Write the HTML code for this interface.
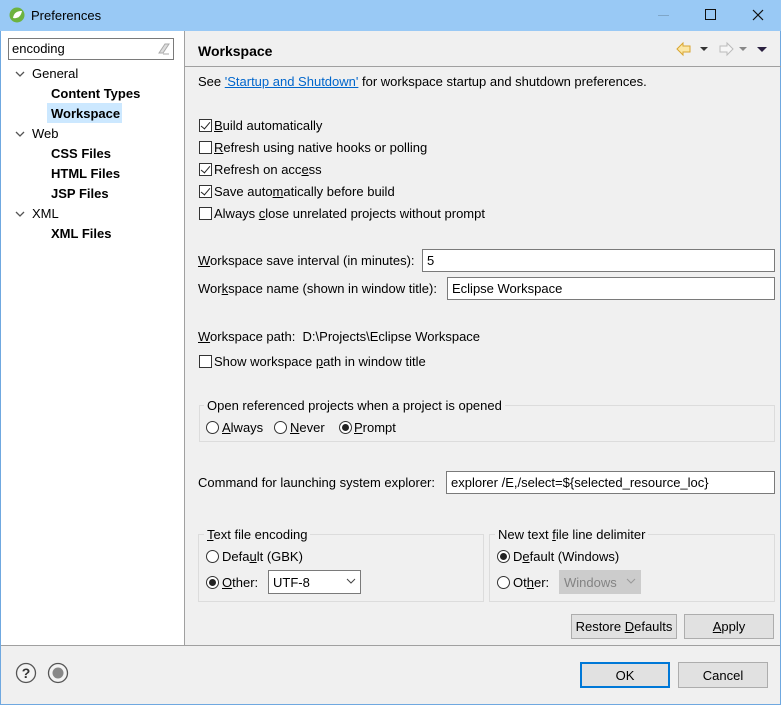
<!DOCTYPE html><html><head><style>
*{box-sizing:border-box;margin:0;padding:0}
body{width:781px;height:705px;overflow:hidden;font-family:"Liberation Sans","Noto Sans CJK SC",sans-serif;font-size:13px;color:#000;background:#f0f0f0;position:relative}
.a{position:absolute;white-space:nowrap}
.t{line-height:16px;padding-top:1px}
.cb{position:absolute;width:13px;height:13px;border:1px solid #333;background:#fff}
.cb.c::after{content:"";position:absolute;left:3px;top:0px;width:4px;height:8px;border:solid #222;border-width:0 1.5px 1.5px 0;transform:rotate(40deg)}
.rb{position:absolute;width:13px;height:13px;border:1px solid #333;border-radius:50%;background:#fff}
.rb.c::after{content:"";position:absolute;left:2px;top:2px;width:7px;height:7px;border-radius:50%;background:#222}
.in{position:absolute;background:#fff;border:1px solid #7a7a7a;padding:4px 4px 2px;line-height:14px}
.grp{position:absolute;border:1px solid #dcdcdc}
.lg{position:absolute;background:#f0f0f0;padding:1px 3px 0;line-height:14px}
.btn{position:absolute;background:#e1e1e1;border:1px solid #adadad;text-align:center;line-height:24px}
u{text-decoration:underline}
</style></head><body>
<div class="a" style="left:0;top:0;width:781px;height:705px;border:1px solid #6fa8e0"></div>
<div class="a" style="left:0;top:0;width:781px;height:31px;background:#99c9f5"></div>
<svg class="a" style="left:9px;top:7px" width="16" height="16"><circle cx="8" cy="8" r="7.5" fill="#6db33f"/><path d="M4 11 C5 5 9 4 13 4 C12 9 9 12 4 11Z" fill="#fff"/></svg>
<div class="a t" style="left:31px;top:7px;font-size:13px">Preferences</div>
<div class="a" style="left:658px;top:15px;width:11px;height:1px;background:#7fa6c8"></div>
<div class="a" style="left:705px;top:9px;width:11px;height:11px;border:1px solid #111"></div>
<svg class="a" style="left:752px;top:9px" width="12" height="12"><path d="M1 1L11 11M11 1L1 11" stroke="#111" stroke-width="1.2"/></svg>
<div class="a" style="left:1px;top:31px;width:184px;height:614px;background:#fff;border-right:1px solid #a0a0a0"></div>
<div class="in" style="left:8px;top:38px;width:166px;height:22px;padding:3px 3px 1px;font-size:13px">encoding</div>
<svg class="a" style="left:156px;top:42px" width="14" height="13"><path d="M3 11L9 2H13L7 11Z" fill="#ddd" stroke="#aaa"/><path d="M7 12H13" stroke="#aaa"/></svg>
<svg class="a" style="left:15px;top:70px" width="10" height="8"><path d="M1 2L5 6L9 2" stroke="#555" fill="none" stroke-width="1.3"/></svg>
<svg class="a" style="left:15px;top:130px" width="10" height="8"><path d="M1 2L5 6L9 2" stroke="#555" fill="none" stroke-width="1.3"/></svg>
<svg class="a" style="left:15px;top:210px" width="10" height="8"><path d="M1 2L5 6L9 2" stroke="#555" fill="none" stroke-width="1.3"/></svg>
<div class="a t" style="left:32px;top:65px">General</div>
<div class="a t" style="left:51px;top:85px;font-weight:bold">Content Types</div>
<div class="a" style="left:47px;top:103px;width:75px;height:20px;background:#cce8ff"></div>
<div class="a t" style="left:51px;top:105px;font-weight:bold">Workspace</div>
<div class="a t" style="left:32px;top:125px">Web</div>
<div class="a t" style="left:51px;top:145px;font-weight:bold">CSS Files</div>
<div class="a t" style="left:51px;top:165px;font-weight:bold">HTML Files</div>
<div class="a t" style="left:51px;top:185px;font-weight:bold">JSP Files</div>
<div class="a t" style="left:32px;top:205px">XML</div>
<div class="a t" style="left:51px;top:225px;font-weight:bold">XML Files</div>
<div class="a t" style="left:198px;top:42px;font-weight:bold;font-size:14px">Workspace</div>
<svg class="a" style="left:675px;top:41px" width="100" height="16"><path d="M2 8L8 2V5H15V11H8V14Z" fill="#fbe7a6" stroke="#d9a530"/><path d="M25 6L29 10L33 6Z" fill="#333"/><path d="M58 8L52 2V5H45V11H52V14Z" fill="#f6f6f6" stroke="#bbb"/><path d="M64 6L68 10L72 6Z" fill="#888"/><path d="M82 6L87 11L92 6Z" fill="#2a2040"/></svg>
<div class="a" style="left:185px;top:66px;width:596px;height:1px;background:#a0a0a0"></div>
<div class="a t" style="left:198px;top:73px">See <span style="color:#0066cc;text-decoration:underline">'Startup and Shutdown'</span> for workspace startup and shutdown preferences.</div>
<div class="cb c" style="left:199px;top:119px"></div><div class="a t" style="left:214px;top:117px"><u>B</u>uild automatically</div>
<div class="cb" style="left:199px;top:141px"></div><div class="a t" style="left:214px;top:139px"><u>R</u>efresh using native hooks or polling</div>
<div class="cb c" style="left:199px;top:163px"></div><div class="a t" style="left:214px;top:161px">Refresh on acc<u>e</u>ss</div>
<div class="cb c" style="left:199px;top:185px"></div><div class="a t" style="left:214px;top:183px">Save auto<u>m</u>atically before build</div>
<div class="cb" style="left:199px;top:207px"></div><div class="a t" style="left:214px;top:205px">Always <u>c</u>lose unrelated projects without prompt</div>
<div class="a t" style="left:198px;top:252px"><u>W</u>orkspace save interval (in minutes):</div>
<div class="in" style="left:422px;top:249px;width:353px;height:23px">5</div>
<div class="a t" style="left:198px;top:280px">Wor<u>k</u>space name (shown in window title):</div>
<div class="in" style="left:447px;top:277px;width:328px;height:23px">Eclipse Workspace</div>
<div class="a t" style="left:198px;top:328px"><u>W</u>orkspace path:&nbsp; D:\Projects\Eclipse Workspace</div>
<div class="cb" style="left:199px;top:355px"></div><div class="a t" style="left:214px;top:353px">Show workspace <u>p</u>ath in window title</div>
<div class="grp" style="left:199px;top:405px;width:576px;height:37px"></div>
<div class="lg" style="left:204px;top:398px">Open referenced projects when a project is opened</div>
<div class="rb" style="left:206px;top:421px"></div><div class="a t" style="left:222px;top:419px"><u>A</u>lways</div>
<div class="rb" style="left:274px;top:421px"></div><div class="a t" style="left:290px;top:419px"><u>N</u>ever</div>
<div class="rb c" style="left:339px;top:421px"></div><div class="a t" style="left:354px;top:419px"><u>P</u>rompt</div>
<div class="a t" style="left:198px;top:474px">Command for launching system explorer:</div>
<div class="in" style="left:446px;top:471px;width:329px;height:23px">explorer /E,/select=${selected_resource_loc}</div>
<div class="grp" style="left:198px;top:534px;width:286px;height:68px"></div>
<div class="lg" style="left:204px;top:527px"><u>T</u>ext file encoding</div>
<div class="rb" style="left:206px;top:550px"></div><div class="a t" style="left:222px;top:548px">Defa<u>u</u>lt (GBK)</div>
<div class="rb c" style="left:206px;top:576px"></div><div class="a t" style="left:222px;top:574px"><u>O</u>ther:</div>
<div class="in" style="left:268px;top:570px;width:93px;height:24px;padding-top:5px">UTF-8</div>
<svg class="a" style="left:346px;top:578px" width="10" height="7"><path d="M1 1L5 5L9 1" stroke="#444" fill="none"/></svg>
<div class="grp" style="left:489px;top:534px;width:286px;height:68px"></div>
<div class="lg" style="left:495px;top:527px">New text <u>f</u>ile line delimiter</div>
<div class="rb c" style="left:497px;top:550px"></div><div class="a t" style="left:513px;top:548px">D<u>e</u>fault (Windows)</div>
<div class="rb" style="left:497px;top:576px"></div><div class="a t" style="left:513px;top:574px">Ot<u>h</u>er:</div>
<div class="a" style="left:559px;top:570px;width:82px;height:24px;background:#ccc;border:1px solid #ccc;color:#838383;padding:5px 4px 0;line-height:14px">Windows</div>
<svg class="a" style="left:626px;top:578px" width="10" height="7"><path d="M1 1L5 5L9 1" stroke="#999" fill="none"/></svg>
<div class="btn" style="left:571px;top:614px;width:106px;height:25px">Restore <u>D</u>efaults</div>
<div class="btn" style="left:684px;top:614px;width:90px;height:25px"><u>A</u>pply</div>
<div class="a" style="left:1px;top:645px;width:779px;height:1px;background:#a0a0a0"></div>
<svg class="a" style="left:15px;top:662px" width="60" height="24"><circle cx="11" cy="11" r="9.5" fill="#f4f4f4" stroke="#555" stroke-width="1.3"/><text x="11" y="16" font-size="14" font-weight="bold" text-anchor="middle" fill="#333" font-family="Liberation Sans">?</text><circle cx="43" cy="11" r="9.5" fill="#f4f4f4" stroke="#555" stroke-width="1.3"/><circle cx="43" cy="11" r="5.5" fill="#888"/></svg>
<div class="btn" style="left:580px;top:662px;width:90px;height:26px;border:2px solid #0078d7;line-height:23px">OK</div>
<div class="btn" style="left:678px;top:662px;width:90px;height:26px;line-height:25px">Cancel</div>
</body></html>
